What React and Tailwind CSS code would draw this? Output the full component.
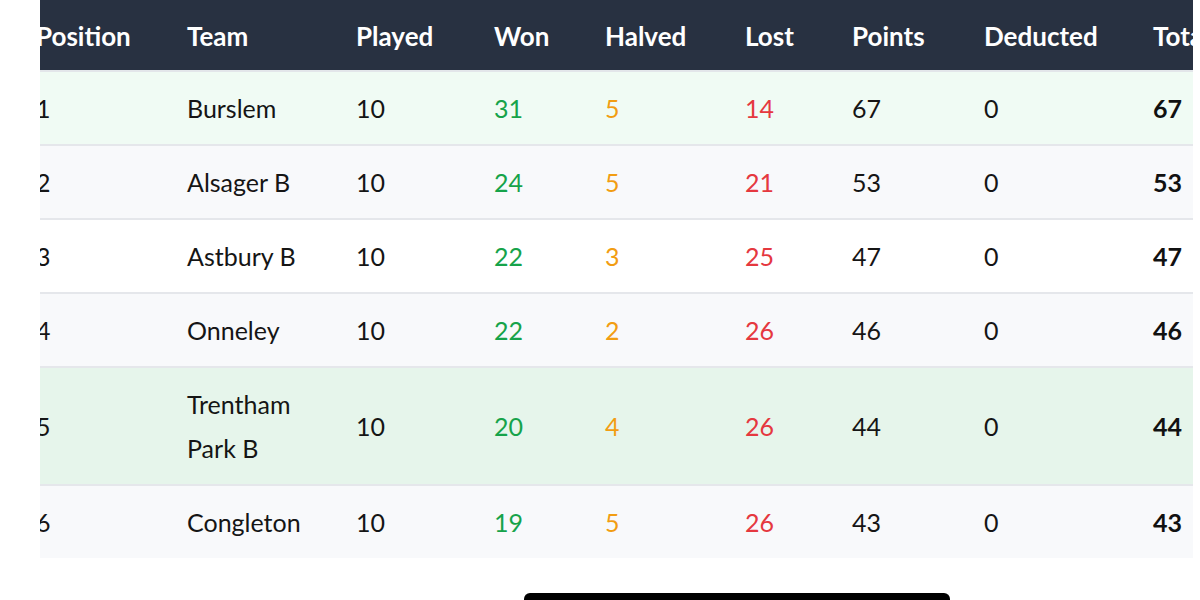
import React from "react";

const rows = [
  { pos: "1", team: "Burslem", played: "10", won: "31", halved: "5", lost: "14", points: "67", ded: "0", total: "67", bg: "bg-[#f0fbf4]" },
  { pos: "2", team: "Alsager B", played: "10", won: "24", halved: "5", lost: "21", points: "53", ded: "0", total: "53", bg: "bg-[#f8f9fb]" },
  { pos: "3", team: "Astbury B", played: "10", won: "22", halved: "3", lost: "25", points: "47", ded: "0", total: "47", bg: "bg-white" },
  { pos: "4", team: "Onneley", played: "10", won: "22", halved: "2", lost: "26", points: "46", ded: "0", total: "46", bg: "bg-[#f8f9fb]" },
  { pos: "5", team: "Trentham Park B", played: "10", won: "20", halved: "4", lost: "26", points: "44", ded: "0", total: "44", bg: "bg-[#e6f5eb]" },
  { pos: "6", team: "Congleton", played: "10", won: "19", halved: "5", lost: "26", points: "43", ded: "0", total: "43", bg: "bg-[#f8f9fb]" },
];

export default function App() {
  return (
    <div
      className="relative w-[1200px] h-[600px] overflow-hidden bg-white"
      style={{ fontFamily: "Lato, 'Noto Sans', sans-serif" }}
    >
      <div className="ml-[40px] w-[1153px] overflow-hidden">
        <table className="-ml-[28px] w-[1227px] table-fixed border-collapse text-left">
          <thead>
            <tr className="h-[71px] bg-[#283141] text-white text-[26px] font-bold border-b-2 border-[#e3e6ea]">
              <th className="w-[151px] pl-6 pt-[3px] font-bold">Position</th>
              <th className="w-[169px] pl-6 pt-[3px] font-bold">Team</th>
              <th className="w-[138px] pl-6 pt-[3px] font-bold">Played</th>
              <th className="w-[111px] pl-6 pt-[3px] font-bold">Won</th>
              <th className="w-[140px] pl-6 pt-[3px] font-bold">Halved</th>
              <th className="w-[107px] pl-6 pt-[3px] font-bold">Lost</th>
              <th className="w-[132px] pl-6 pt-[3px] font-bold">Points</th>
              <th className="w-[169px] pl-6 pt-[3px] font-bold">Deducted</th>
              <th className="w-[110px] pl-6 pt-[3px] font-bold">Total</th>
            </tr>
          </thead>
          <tbody className="text-[25px] leading-[44px] text-[#151515]">
            {rows.map((r) => (
              <tr key={r.pos} className={`${r.bg} border-b-2 border-[#e5e7eb] last:border-b-0`}>
                <td className="pl-6 py-[14px]">{r.pos}</td>
                <td className="pl-6 pr-4 py-[14px]">{r.team}</td>
                <td className="pl-6 py-[14px]">{r.played}</td>
                <td className="pl-6 py-[14px] text-[#16a34a]">{r.won}</td>
                <td className="pl-6 py-[14px] text-[#f29d12]">{r.halved}</td>
                <td className="pl-6 py-[14px] text-[#e5383f]">{r.lost}</td>
                <td className="pl-6 py-[14px]">{r.points}</td>
                <td className="pl-6 py-[14px]">{r.ded}</td>
                <td className="pl-6 py-[14px] font-bold text-[#111]">{r.total}</td>
              </tr>
            ))}
          </tbody>
        </table>
      </div>
      <div className="absolute left-[524px] top-[593px] h-[12px] w-[426px] rounded-full bg-black" />
    </div>
  );
}
